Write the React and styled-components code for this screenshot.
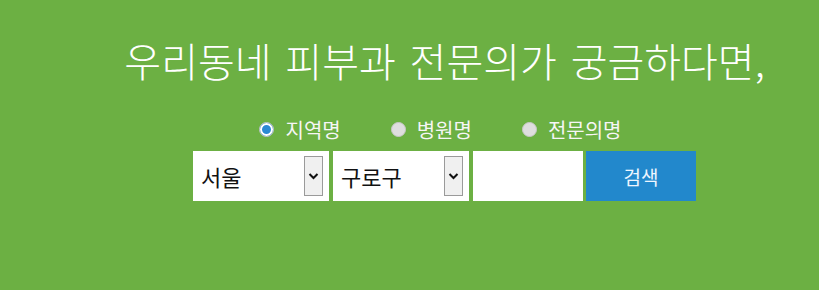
import React, { useState } from "react";
import styled, { createGlobalStyle } from "styled-components";

const GlobalStyle = createGlobalStyle`
  html, body {
    margin: 0;
    padding: 0;
    background: #6cb043;
  }
  body {
    font-family: "Noto Sans CJK KR", "Noto Sans", sans-serif;
  }
`;

const Page = styled.div`
  width: 819px;
  height: 290px;
  box-sizing: border-box;
  padding: 30px 0 0 70px;
  background: #6cb043;
  display: flex;
  flex-direction: column;
  align-items: center;
`;

const Title = styled.h1`
  margin: 0;
  font-family: "Noto Sans CJK KR", serif;
  font-weight: 300;
  font-size: 40px;
  line-height: 60px;
  color: #ffffff;
  word-spacing: 5px;
  white-space: nowrap;
`;

const RadioRow = styled.div`
  display: flex;
  gap: 50px;
  margin-top: 24px;
  margin-left: -8px;
  height: 30px;
  align-items: center;
`;

const RadioLabel = styled.label`
  display: flex;
  align-items: center;
  gap: 11px;
  font-size: 20px;
  color: #f6f6f6;
  cursor: pointer;
`;

const Radio = styled.input.attrs({ type: "radio" })`
  appearance: none;
  margin: 0;
  width: 15px;
  height: 15px;
  border-radius: 50%;
  box-sizing: border-box;
  border: 1px solid #c8c8c8;
  background: #dedede;
  &:checked {
    background: #2b8ad4;
    box-shadow: inset 0 0 0 2px #ffffff;
  }
`;

const Form = styled.form`
  display: flex;
  margin-top: 7px;
  height: 50px;
`;

const SelectWrap = styled.div`
  position: relative;
  width: 136px;
  height: 50px;
  margin-right: 4px;
`;

const Select = styled.select`
  appearance: none;
  width: 100%;
  height: 100%;
  margin: 0;
  border: none;
  outline: none;
  background: #ffffff;
  padding: 0 0 0 8px;
  font-family: "Noto Sans CJK KR", sans-serif;
  font-size: 22px;
  color: #111;
`;

const ArrowBox = styled.span`
  position: absolute;
  right: 6px;
  top: 5px;
  width: 19px;
  height: 40px;
  box-sizing: border-box;
  border: 1px solid #9a9a9a;
  background: #f0f0f0;
  display: flex;
  align-items: center;
  justify-content: center;
  pointer-events: none;
`;

const TextInput = styled.input`
  width: 110px;
  height: 50px;
  box-sizing: border-box;
  border: none;
  margin: 0 3px 0 0;
  padding: 0 6px;
  outline: none;
  background: #ffffff;
  font-size: 17px;
`;

const SearchButton = styled.button`
  width: 110px;
  height: 50px;
  border: none;
  margin: 0;
  background: #2288cc;
  color: #eef6ff;
  font-family: "Noto Sans CJK KR", sans-serif;
  font-size: 19px;
  cursor: pointer;
`;

const Chevron = () => (
  <svg width="11" height="8" viewBox="0 0 11 8">
    <path d="M1.5 2 L5.5 6 L9.5 2" fill="none" stroke="#111" strokeWidth="2" />
  </svg>
);

const options = ["지역명", "병원명", "전문의명"];

export default function App() {
  const [mode, setMode] = useState("지역명");
  return (
    <>
      <GlobalStyle />
      <Page>
        <Title>우리동네 피부과 전문의가 궁금하다면,</Title>
        <RadioRow>
          {options.map((o) => (
            <RadioLabel key={o}>
              <Radio name="mode" checked={mode === o} onChange={() => setMode(o)} />
              {o}
            </RadioLabel>
          ))}
        </RadioRow>
        <Form onSubmit={(e) => e.preventDefault()}>
          <SelectWrap>
            <Select defaultValue="서울">
              <option>서울</option>
            </Select>
            <ArrowBox>
              <Chevron />
            </ArrowBox>
          </SelectWrap>
          <SelectWrap>
            <Select defaultValue="구로구">
              <option>구로구</option>
            </Select>
            <ArrowBox>
              <Chevron />
            </ArrowBox>
          </SelectWrap>
          <TextInput type="text" />
          <SearchButton type="submit">검색</SearchButton>
        </Form>
      </Page>
    </>
  );
}
